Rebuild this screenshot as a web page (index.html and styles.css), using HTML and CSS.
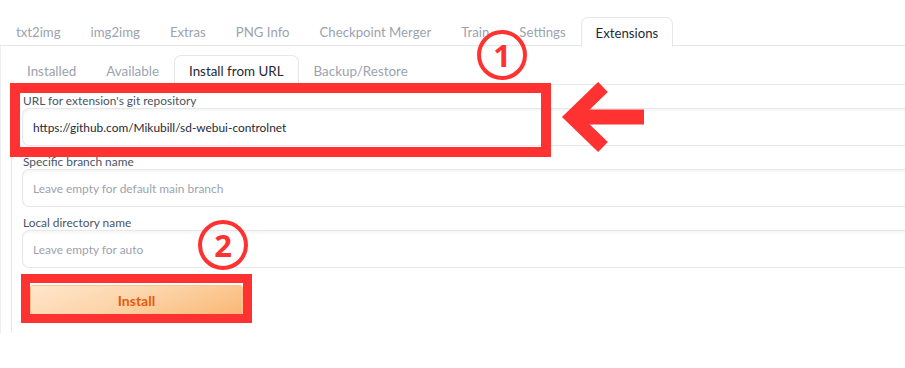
FILE: index.html
```html
<!DOCTYPE html>
<html lang="en">

<head>
    <meta charset="UTF-8">
    <meta name="viewport" content="width=device-width, initial-scale=1.0">
    <title>Extensions - Install from URL</title>
    <link rel="stylesheet" href="styles.css">
</head>

<body>
    <div class="tabs">
        <div class="tab-nav">
            <button class="tab">txt2img</button>
            <button class="tab">img2img</button>
            <button class="tab">Extras</button>
            <button class="tab">PNG Info</button>
            <button class="tab">Checkpoint Merger</button>
            <button class="tab">Train</button>
            <button class="tab">Settings</button>
            <button class="tab selected">Extensions</button>
        </div>
        <div class="tab-panel">
            <div class="tabs sub">
                <div class="tab-nav">
                    <button class="tab">Installed</button>
                    <button class="tab">Available</button>
                    <button class="tab selected">Install from URL</button>
                    <button class="tab">Backup/Restore</button>
                </div>
                <div class="tab-panel inner">
                    <div class="field">
                        <label>URL for extension's git repository</label>
                        <div class="input">https://github.com/Mikubill/sd-webui-controlnet</div>
                    </div>
                    <div class="field">
                        <label>Specific branch name</label>
                        <div class="input empty">Leave empty for default main branch</div>
                    </div>
                    <div class="field">
                        <label>Local directory name</label>
                        <div class="input empty">Leave empty for auto</div>
                    </div>
                    <button class="install">Install</button>
                </div>
            </div>
        </div>
    </div>

    <!-- annotation overlay -->
    <div class="mark box-url"></div>
    <div class="mark box-install"></div>
    <div class="mark step step-1">1</div>
    <div class="mark step step-2">2</div>
    <svg class="mark arrow" width="100" height="80" viewBox="0 0 100 80">
        <polyline points="43,5 12,35 43,65" fill="none" stroke="#ff3232" stroke-width="14" stroke-linejoin="miter" />
        <line x1="16" y1="35" x2="84" y2="35" stroke="#ff3232" stroke-width="15" />
    </svg>
</body>

</html>
```

FILE: styles.css
```css
* {
    margin: 0;
    padding: 0;
    box-sizing: border-box;
}

body {
    background-color: #fff;
    color: #1f2937;
    font-family: Lato, "Noto Sans", sans-serif;
    padding-top: 17px;
    position: relative;
    min-height: 368px;
    overflow: hidden;
}

.tab-nav {
    display: flex;
    border-bottom: 1px solid #e5e7eb;
    padding-left: 1px;
    height: 29px;
}

.tab {
    font: inherit;
    font-size: 13.2px;
    color: #9ca3af;
    background: none;
    border: 1px solid transparent;
    border-bottom: none;
    padding: 0 14px;
    height: 29px;
    border-radius: 7px 7px 0 0;
}

.tab.selected {
    color: #1f2937;
    background-color: #fff;
    border-color: #e5e7eb;
    height: 30px;
}

.tab-panel {
    border-left: 1px solid #eceef2;
    padding: 9px 0 0 10px;
    height: 287px;
}

.sub .tab-nav {
    height: 30px;
}

.sub .tab {
    height: 30px;
    font-size: 13.4px;
}

.sub .tab.selected {
    height: 31px;
}

.tab-panel.inner {
    border-left: 1px solid #e5e7eb;
    padding: 8px 0 0 10px;
    height: 248px;
}

.field {
    margin-bottom: 8px;
}

.field label {
    display: block;
    font-size: 11.9px;
    line-height: 15px;
    color: #4b5563;
    padding-left: 1px;
}

.input {
    height: 38px;
    border: 1px solid #e5e7eb;
    border-right: none;
    border-radius: 7px 0 0 7px;
    box-shadow: inset 0 2px 3px rgba(0, 0, 0, 0.04);
    padding: 0 10px;
    display: flex;
    align-items: center;
    font-size: 11.9px;
    color: #1f2937;
}

.input.empty {
    color: #9ca3af;
}

.install {
    font: inherit;
    font-size: 14px;
    font-weight: 700;
    color: #ea580c;
    width: 213px;
    height: 31px;
    margin: 9px 0 0 8px;
    border: 1px solid #fdc28e;
    border-radius: 3px;
    background: linear-gradient(160deg, #ffe6cc 0%, #fcd3a6 50%, #fab775 100%);
}

.mark {
    position: absolute;
}

.box-url {
    left: 10px;
    top: 83px;
    width: 541px;
    height: 74px;
    border: 10px solid #ff3232;
}

.box-install {
    left: 21px;
    top: 274px;
    width: 231px;
    height: 49px;
    border: 9px solid #ff3232;
}

.step {
    width: 50px;
    height: 50px;
    border: 4px solid #ff3232;
    border-radius: 50%;
    color: #ff3232;
    font-family: "Noto Sans", sans-serif;
    font-size: 31px;
    font-weight: 700;
    display: flex;
    align-items: center;
    justify-content: center;
    line-height: 1;
}

.step-1 {
    left: 477px;
    top: 30px;
}

.step-2 {
    left: 198px;
    top: 220px;
}

.arrow {
    left: 560px;
    top: 82px;
}
```
